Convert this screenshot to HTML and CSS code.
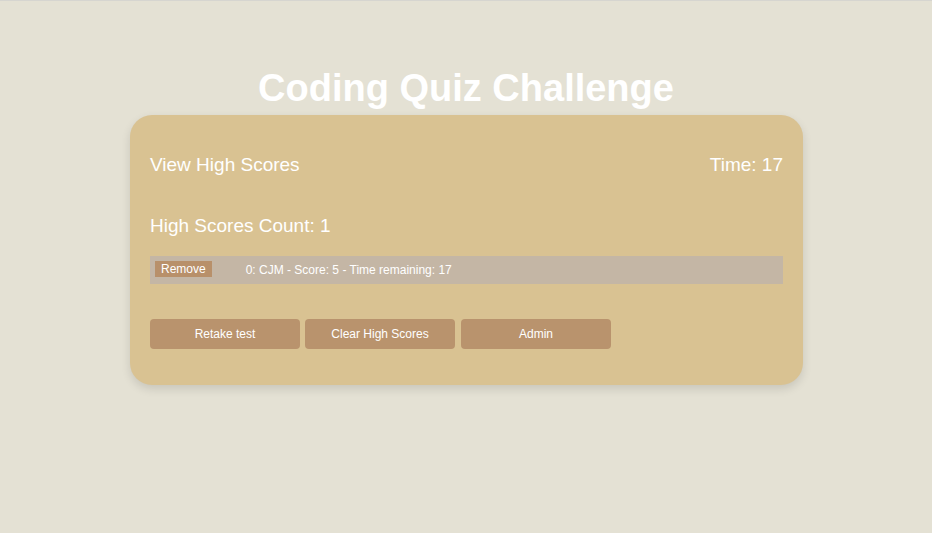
FILE: index.html
```html
<!DOCTYPE html>
<html lang="en">
<head>
<meta charset="utf-8">
<title>Coding Quiz Challenge</title>
<link rel="stylesheet" href="styles.css">
</head>
<body>
<main class="page">
  <h1 class="title">Coding Quiz Challenge</h1>
  <section class="card">
    <header class="card-header">
      <a class="view-scores" href="#">View High Scores</a>
      <span class="timer">Time: 17</span>
    </header>
    <h2 class="count">High Scores Count: 1</h2>
    <ul class="score-list">
      <li class="score-row">
        <button class="remove-btn">Remove</button>
        <span class="score-text">0: CJM - Score: 5 - Time remaining: 17</span>
      </li>
    </ul>
    <div class="actions">
      <button class="action-btn">Retake test</button>
      <button class="action-btn">Clear High Scores</button>
      <button class="action-btn">Admin</button>
    </div>
  </section>
</main>
</body>
</html>
```
FILE: styles.css
```css
* { box-sizing: border-box; }
html, body { margin: 0; padding: 0; }
body {
  background: #e4e1d4;
  border-top: 1px solid #d6d5d0;
  font-family: "Liberation Sans", Arial, sans-serif;
  color: #ffffff;
  min-height: 533px;
}
.page {
  display: flex;
  flex-direction: column;
  align-items: center;
  padding-top: 64px;
}
.title {
  margin: 0 0 4px;
  font-size: 38px;
  font-weight: bold;
  line-height: 46px;
  color: #ffffff;
}
.card {
  width: 673px;
  margin-left: 1px;
  background: #d9c292;
  border-radius: 22px;
  padding: 39px 20px 36px;
  box-shadow: 0 4px 10px rgba(0, 0, 0, 0.12);
}
.card-header {
  display: flex;
  justify-content: space-between;
  align-items: center;
  font-size: 19px;
  line-height: 22px;
}
.view-scores { color: #ffffff; text-decoration: none; }
.count {
  margin: 39px 0 0;
  font-size: 19px;
  font-weight: normal;
  line-height: 22px;
}
.score-list {
  list-style: none;
  margin: 19px 0 0;
  padding: 0;
}
.score-row {
  display: flex;
  align-items: center;
  background: #c4b6a5;
  height: 28px;
  padding: 0 5px;
  font-size: 12px;
}
.remove-btn {
  background: #b8906a;
  color: #ffffff;
  border: none;
  border-radius: 0;
  font-family: inherit;
  font-size: 12px;
  line-height: 16px;
  height: 16px;
  padding: 0 6px;
  margin: 0 0 2px;
}
.score-text { margin-left: 34px; }
.actions {
  display: flex;
  gap: 5px;
  margin-top: 35px;
}
.action-btn {
  width: 150px;
  height: 30px;
  background: #b9936d;
  color: #ffffff;
  border: none;
  border-radius: 4px;
  font-family: inherit;
  font-size: 12px;
  padding: 0;
}
.action-btn:last-child { margin-left: 1px; }
```
